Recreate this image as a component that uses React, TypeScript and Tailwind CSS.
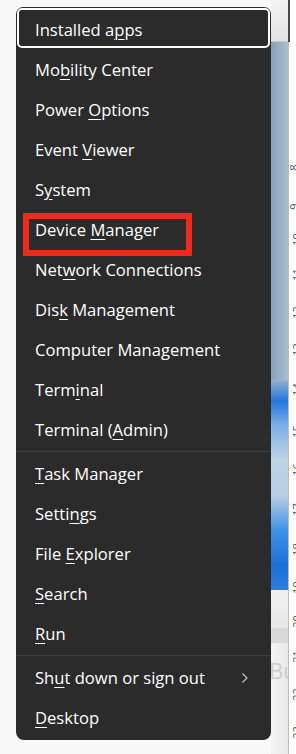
import React from 'react';

type Item = { pre: string; key: string; post: string; sub?: boolean };

const groups: Item[][] = [
  [
    { pre: 'Installed a', key: 'p', post: 'ps' },
    { pre: 'Mo', key: 'b', post: 'ility Center' },
    { pre: 'Power ', key: 'O', post: 'ptions' },
    { pre: 'Event ', key: 'V', post: 'iewer' },
    { pre: 'S', key: 'y', post: 'stem' },
    { pre: 'Device ', key: 'M', post: 'anager' },
    { pre: 'Net', key: 'w', post: 'ork Connections' },
    { pre: 'Dis', key: 'k', post: ' Management' },
    { pre: 'Computer Mana', key: 'g', post: 'ement' },
    { pre: 'Term', key: 'i', post: 'nal' },
    { pre: 'Terminal (', key: 'A', post: 'dmin)' },
  ],
  [
    { pre: '', key: 'T', post: 'ask Manager' },
    { pre: 'Setti', key: 'n', post: 'gs' },
    { pre: 'File ', key: 'E', post: 'xplorer' },
    { pre: '', key: 'S', post: 'earch' },
    { pre: '', key: 'R', post: 'un' },
  ],
  [
    { pre: 'Sh', key: 'u', post: 't down or sign out', sub: true },
    { pre: '', key: 'D', post: 'esktop' },
  ],
];

// ruler labels down the right edge (y centre of each)
const ruler = [
  [8, 168], [9, 207], [10, 240], [11, 275], [12, 313], [13, 350], [14, 390], [15, 432],
  [16, 470], [17, 510], [18, 550], [19, 588], [20, 622], [21, 657], [22, 695], [23, 733],
];

const MenuRow: React.FC<{ item: Item; focused?: boolean }> = ({ item, focused }) => (
  <div className="relative flex h-10 items-center pl-[19px] pr-[22px] text-white">
    {focused && (
      <div className="absolute -top-[2px] bottom-[2px] left-[1px] right-[1px] rounded-[5px] border-2 border-white" />
    )}
    <span className="flex-1 whitespace-nowrap">
      {item.pre}
      <u className="decoration-1 underline-offset-[3px]">{item.key}</u>
      {item.post}
    </span>
    {item.sub && (
      <svg width="8" height="12" viewBox="0 0 8 12" className="mt-[-1px]">
        <path d="M1.5 1.5 L6 6 L1.5 10.5" fill="none" stroke="#cfcfcf" strokeWidth="1.1" />
      </svg>
    )}
  </div>
);

export default function App() {
  return (
    <div
      className="relative h-[754px] w-[296px] overflow-hidden bg-[#f9f9f9]"
      style={{ fontFamily: '"Open Sans", "Noto Sans", sans-serif' }}
    >
      {/* desktop behind the menu */}
      <div className="flex h-full">
        <div className="w-[271px] bg-[#f9f9f9]" />
        <div className="relative flex w-[17px] flex-col">
          <div className="h-[42px] bg-gradient-to-b from-[#f4f4f4] to-[#e2e2e2] border-b border-[#c9c9c9]" />
          <div className="h-[338px] bg-gradient-to-r from-[#86a2bb] to-[#a9bfd0]" />
          <div className="h-[210px] bg-[linear-gradient(180deg,#93b2d0_0%,#2477de_10%,#7fb0e8_22%,#c0d4e4_38%,#b7cfe4_55%,#3e91e8_72%,#1c6fd8_88%,#2c7ee2_100%)]" />
          <div className="h-[38px] bg-gradient-to-b from-[#f1f1f1] to-[#e7e7e7]" />
          <div className="h-[15px] bg-[#d9d9d9]" />
          <div className="flex-1 bg-gradient-to-r from-[#f3f3f3] to-[#e9e9e9]" />
          <span className="absolute left-[-2px] top-[659px] text-[22px] leading-none text-[#cdcdcd]">Bu</span>
        </div>
        <div className="relative w-[8px] border-l border-[#bdbdbd] bg-white">
          <div className="absolute left-[-1px] top-0 h-[42px] w-[2px] bg-[#4a4a4a]" />
          {ruler.map(([n, y]) => (
            <span
              key={n}
              className="absolute left-[1px] -rotate-90 text-[11px] leading-none text-[#555]"
              style={{ top: y - 6 }}
            >
              {n}
            </span>
          ))}
        </div>
      </div>

      {/* Win+X menu */}
      <div className="absolute left-4 top-[7px] w-[255px] rounded-b-[8px] rounded-t-[7px] bg-[#2b2b2b] pb-[2px] pt-[3px] text-[16.6px]">
        {groups.map((g, gi) => (
          <div key={gi}>
            {gi > 0 && (
              <div className="h-[4px] pt-[1px]">
                <div className="h-px bg-[#3f3f3f]" />
              </div>
            )}
            {g.map((item, i) => (
              <MenuRow key={item.pre + item.key} item={item} focused={gi === 0 && i === 0} />
            ))}
          </div>
        ))}
      </div>

      {/* red highlight annotation */}
      <div className="absolute left-[23px] top-[213px] h-[43px] w-[169px] border-[6px] border-[#ee2a1f]" />
    </div>
  );
}
